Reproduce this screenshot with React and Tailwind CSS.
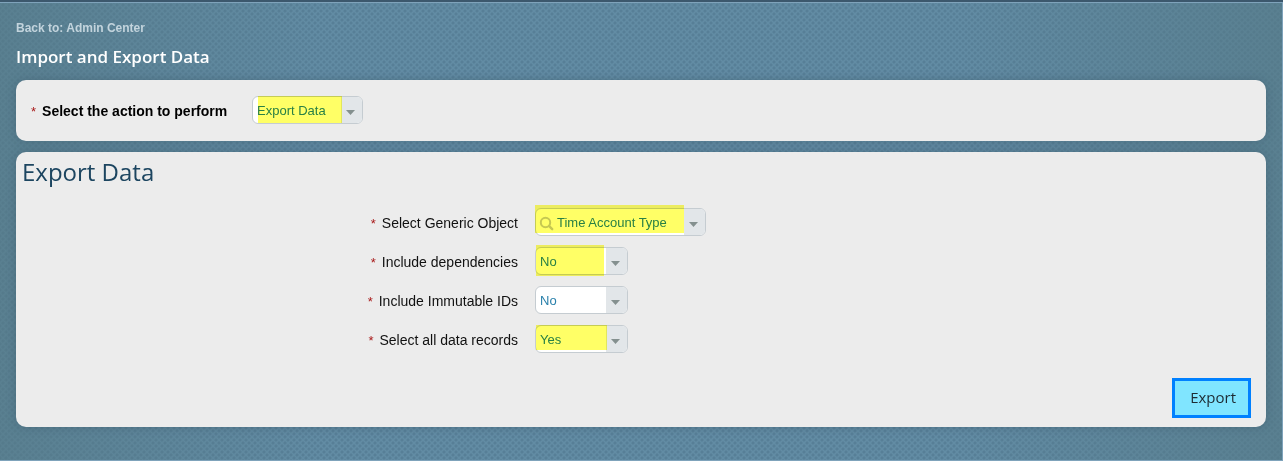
import React, { useState } from "react";

const YES_NO = ["Yes", "No"];

/**
 * Small magnifier shown inside searchable dropdowns.
 */
const SearchIcon = () => (
  <svg
    className="pointer-events-none absolute top-2 left-1 h-4 w-4"
    viewBox="0 0 16 16"
    fill="none"
    stroke="#c6c8ca"
    strokeWidth="2"
    strokeLinecap="round"
    aria-hidden="true"
  >
    <circle cx="6.5" cy="6.5" r="4.7" />
    <path d="M10.2 10.2l3 3" strokeWidth="2.4" />
  </svg>
);

/**
 * Dropdown with a grey arrow button on its right side.
 *
 * @param {string} props.width - Width class of the whole control.
 * @param {string} props.highlight - Position classes of the marker overlay.
 */
const Dropdown = ({ id, value, onChange, options, width, search, highlight }) => (
  <div className={`relative h-7 ${width}`}>
    <div className="flex h-7 overflow-hidden rounded-md border border-[#c5ccd1] bg-white">
      <select
        id={id}
        value={value}
        onChange={(e) => onChange(e.target.value)}
        className={`w-full cursor-pointer appearance-none bg-transparent pt-0.5 pr-6 text-[13px] text-[#2980ab] outline-none ${
          search ? "pl-[21px]" : "pl-1"
        }`}
      >
        {options.map((option) => (
          <option key={option}>{option}</option>
        ))}
      </select>
    </div>
    {search && <SearchIcon />}
    <span className="pointer-events-none absolute inset-y-px right-px flex w-[21px] items-center justify-center rounded-r-[5px] bg-[#e2e6e9] pt-1 pr-0.5">
      <svg width="9" height="5" viewBox="0 0 9 5" aria-hidden="true">
        <path d="M0 0h9L4.5 5z" fill="#84908f" />
      </svg>
    </span>
    {highlight && (
      <span
        className={`pointer-events-none absolute bg-[#ffff66] mix-blend-multiply ${highlight}`}
      />
    )}
  </div>
);

const Required = () => (
  <span className="mr-1.5 text-[13px] font-normal text-[#a81818]">*</span>
);

const FIELDS = [
  {
    id: "object",
    label: "Select Generic Object",
    options: ["Time Account Type"],
    width: "w-[171px]",
    search: true,
    highlight: "-top-[3px] left-0 h-7 w-[149px]",
  },
  {
    id: "dependencies",
    label: "Include dependencies",
    options: YES_NO,
    width: "w-[93px]",
    highlight: "-top-0.5 left-px h-[31px] w-[68px]",
  },
  {
    id: "immutable",
    label: "Include Immutable IDs",
    options: YES_NO,
    width: "w-[93px]",
  },
  {
    id: "records",
    label: "Select all data records",
    options: YES_NO,
    width: "w-[93px]",
    highlight: "top-0 left-px h-[25px] w-[71px]",
  },
];

const App = () => {
  const [action, setAction] = useState("Export Data");
  const [values, setValues] = useState({
    object: "Time Account Type",
    dependencies: "No",
    immutable: "No",
    records: "Yes",
  });

  return (
    <div className="flex min-h-screen flex-col border-t-2 border-[#3c586d] bg-[#628ca4] bg-[radial-gradient(circle,#577f97_1px,transparent_2px),radial-gradient(circle,#577f97_1px,transparent_2px)] bg-[size:6px_6px] bg-[position:0_0,3px_3px] font-['Liberation_Sans',Arial,sans-serif]">
      <div className="grow border-y border-r border-[#7fa3bb] bg-[linear-gradient(90deg,#54788499,transparent_25%,transparent_75%,#54788499)] px-4 pt-[17px]">
        <a href="#admin" className="block w-fit text-xs leading-4 font-bold text-[#c3d4dd]">
          Back to: Admin Center
        </a>
        <h1 className="mt-[7px] font-['Open_Sans',sans-serif] text-[17px] leading-7 font-semibold text-white">
          Import and Export Data
        </h1>

        <section className="mt-[9px] flex items-center rounded-[10px] bg-[#ececec] px-[15px] pt-4 pb-[17px] shadow-[0_0_8px_#3c5a6c80]">
          <label
            htmlFor="action"
            className="w-[221px] pt-0.5 text-sm font-bold text-black"
          >
            <Required />
            Select the action to perform
          </label>
          <Dropdown
            id="action"
            value={action}
            onChange={setAction}
            options={["Import Data", "Export Data"]}
            width="w-[111px]"
            highlight="top-0 left-1.5 h-[27px] w-[84px]"
          />
        </section>

        <section className="mt-[11px] rounded-[10px] bg-[#ececec] px-[15px] pb-[9px] shadow-[0_0_8px_#3c5a6c80]">
          <h2 className="-ml-[9px] pt-1 font-['Open_Sans',sans-serif] text-2xl text-[#1c4560]">
            Export Data
          </h2>
          <form onSubmit={(e) => e.preventDefault()}>
            <div className="mt-5 grid grid-cols-[487px_1fr] items-center gap-x-[17px] gap-y-[11px]">
              {FIELDS.map(({ label, ...field }) => (
                <React.Fragment key={field.id}>
                  <label
                    htmlFor={field.id}
                    className="pt-0.5 text-right text-sm text-[#111]"
                  >
                    <Required />
                    {label}
                  </label>
                  <Dropdown
                    {...field}
                    value={values[field.id]}
                    onChange={(value) => setValues({ ...values, [field.id]: value })}
                  />
                </React.Fragment>
              ))}
            </div>
            <div className="mt-[25px] flex justify-end">
              <button
                type="submit"
                className="h-10 cursor-pointer border-[3px] border-[#0080ff] bg-[#80e5ff] pr-3 pb-0.5 pl-[15px] font-['Open_Sans',sans-serif] text-[15px] text-[#1d2b33]"
              >
                Export
              </button>
            </div>
          </form>
        </section>
      </div>
    </div>
  );
};

export default App;
